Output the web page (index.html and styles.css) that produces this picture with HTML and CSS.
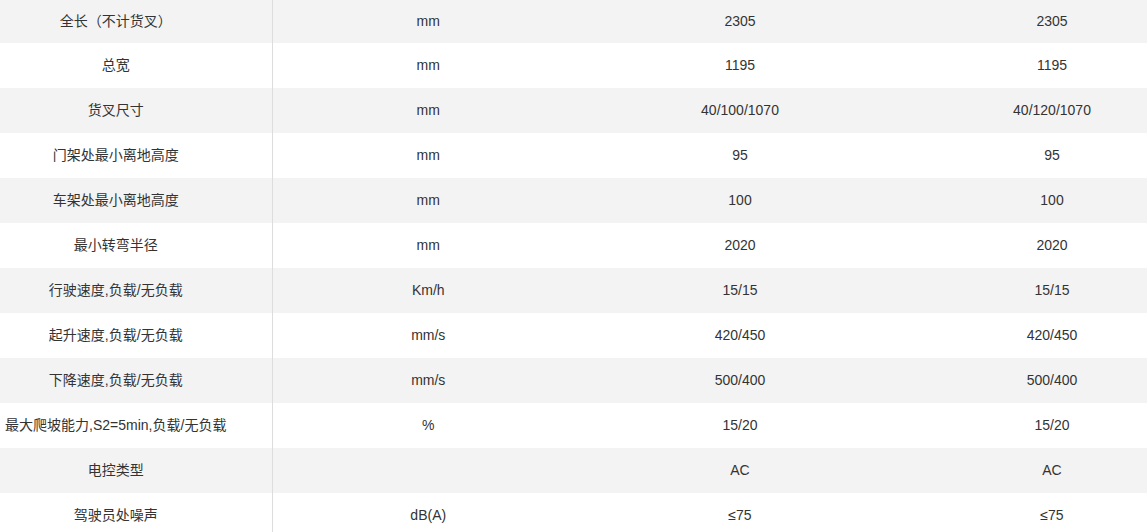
FILE: index.html
```html
<!DOCTYPE html>
<html lang="zh">
<head>
<meta charset="utf-8">
<link rel="stylesheet" href="styles.css">
</head>
<body>
<table class="spec">
<colgroup>
<col class="c-name"><col class="c-unit"><col class="c-val"><col class="c-last">
</colgroup>
<tbody>
<tr><td class="name">全长（不计货叉）</td><td>mm</td><td>2305</td><td class="last">2305</td></tr>
<tr><td class="name">总宽</td><td>mm</td><td>1195</td><td class="last">1195</td></tr>
<tr><td class="name">货叉尺寸</td><td>mm</td><td>40/100/1070</td><td class="last">40/120/1070</td></tr>
<tr><td class="name">门架处最小离地高度</td><td>mm</td><td>95</td><td class="last">95</td></tr>
<tr><td class="name">车架处最小离地高度</td><td>mm</td><td>100</td><td class="last">100</td></tr>
<tr><td class="name">最小转弯半径</td><td>mm</td><td>2020</td><td class="last">2020</td></tr>
<tr><td class="name">行驶速度,负载/无负载</td><td>Km/h</td><td>15/15</td><td class="last">15/15</td></tr>
<tr><td class="name">起升速度,负载/无负载</td><td>mm/s</td><td>420/450</td><td class="last">420/450</td></tr>
<tr><td class="name">下降速度,负载/无负载</td><td>mm/s</td><td>500/400</td><td class="last">500/400</td></tr>
<tr><td class="name">最大爬坡能力,S2=5min,负载/无负载</td><td>%</td><td>15/20</td><td class="last">15/20</td></tr>
<tr><td class="name">电控类型</td><td></td><td>AC</td><td class="last">AC</td></tr>
<tr><td class="name">驾驶员处噪声</td><td>dB(A)</td><td>≤75</td><td class="last">≤75</td></tr>
</tbody>
</table>
</body>
</html>
```
FILE: styles.css
```css
html, body {
  margin: 0;
  padding: 0;
  background: #fff;
  overflow: hidden;
}
.spec {
  width: 1147px;
  table-layout: fixed;
  border-collapse: collapse;
  font-family: "Liberation Sans", "Noto Sans CJK SC", sans-serif;
  font-size: 14px;
  color: #333;
}
.c-name { width: 272px; }
.c-unit { width: 312px; }
.c-val { width: 312px; }
.c-last { width: 251px; }
.spec td {
  height: 43px;
  padding: 0 0 2px 0;
  text-align: center;
  vertical-align: middle;
  white-space: nowrap;
  line-height: 20px;
}
.spec tr:first-child td {
  height: 41px;
}
.spec tr:nth-child(odd) td {
  background: #f3f3f3;
}
.spec td.name {
  padding-right: 40px;
  border-right: 1px solid #ddd;
}
.spec td.last {
  padding-left: 61px;
}
```
